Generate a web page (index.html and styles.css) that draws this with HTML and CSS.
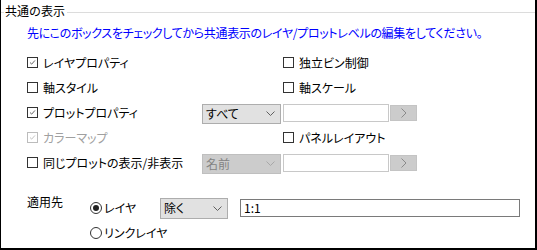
FILE: index.html
```html
<!DOCTYPE html>
<html lang="ja">
<head>
<meta charset="utf-8">
<link rel="stylesheet" href="styles.css">
</head>
<body>
<div class="frame">
  <div class="group-head">
    <span class="gline short"></span>
    <span class="legend">共通の表示</span>
    <span class="gline"></span>
  </div>
  <div class="content">
    <div class="note">先にこのボックスをチェックしてから共通表示のレイヤ/プロットレベルの編集をしてください。</div>
    <div class="grid">
      <label class="chk c1"><span class="box"><svg viewBox="0 0 11 11"><polyline points="2.5,5.5 4.5,7.5 8.5,3" /></svg></span>レイヤプロパティ</label>
      <label class="chk c3"><span class="box"></span>独立ビン制御</label>

      <label class="chk c1"><span class="box"></span>軸スタイル</label>
      <label class="chk c3"><span class="box"></span>軸スケール</label>

      <label class="chk c1"><span class="box"><svg viewBox="0 0 11 11"><polyline points="2.5,5.5 4.5,7.5 8.5,3" /></svg></span>プロットプロパティ</label>
      <div class="select"><span>すべて</span><svg class="arrow" viewBox="0 0 9 5"><polyline points="0.5,0.5 4.5,4.5 8.5,0.5" /></svg></div>
      <div class="input"></div>
      <div class="btn"><svg viewBox="0 0 6 10"><polyline points="0.5,0.5 5,5 0.5,9.5" /></svg></div>

      <label class="chk c1 disabled"><span class="box"><svg viewBox="0 0 11 11"><polyline points="2.5,5.5 4.5,7.5 8.5,3" /></svg></span>カラーマップ</label>
      <label class="chk c3"><span class="box"></span>パネルレイアウト</label>

      <label class="chk c1"><span class="box"></span>同じプロットの表示/非表示</label>
      <div class="select off"><span>名前</span><svg class="arrow" viewBox="0 0 9 5"><polyline points="0.5,0.5 4.5,4.5 8.5,0.5" /></svg></div>
      <div class="input"></div>
      <div class="btn"><svg viewBox="0 0 6 10"><polyline points="0.5,0.5 5,5 0.5,9.5" /></svg></div>
    </div>
    <div class="apply">
      <div class="alabel">適用先</div>
      <label class="radio"><span class="rad on"></span>レイヤ</label>
      <div class="select small"><span>除く</span><svg class="arrow" viewBox="0 0 9 5"><polyline points="0.5,0.5 4.5,4.5 8.5,0.5" /></svg></div>
      <div class="input wide">1:1</div>
      <label class="radio r2"><span class="rad"></span>リンクレイヤ</label>
    </div>
  </div>
</div>
</body>
</html>
```

FILE: styles.css
```css
html, body {
  margin: 0;
  padding: 0;
  background: #ffffff;
}
body {
  font-family: "Noto Sans CJK JP", "Noto Sans", sans-serif;
  font-size: 12px;
  color: #000;
  font-feature-settings: "palt";
}
.frame {
  box-sizing: border-box;
  width: 537px;
  height: 250px;
  border-left: 1px solid #000;
  border-right: 2px solid #000;
  border-bottom: 2px solid #000;
  background: #fff;
}
.group-head {
  display: flex;
  align-items: center;
  height: 24px;
}
.gline {
  flex: 1;
  height: 1px;
  background: #dcdcdc;
}
.gline.short {
  flex: 0 0 3px;
}
.legend {
  padding: 0 2px 2px 1px;
  line-height: 20px;
  font-feature-settings: normal;
}
.content {
  padding-left: 26px;
}
.note {
  color: #0000ff;
  height: 18px;
  line-height: 18px;
  white-space: nowrap;
  letter-spacing: -0.33px;
}
.grid {
  margin-top: 8px;
  display: grid;
  grid-template-columns: 174px 79px 107px 27px;
  column-gap: 1px;
  grid-auto-rows: 25px;
  align-items: center;
}
.c1 { grid-column: 1; }
.c3 { grid-column: 3 / span 2; margin-left: 1px; }
.chk {
  display: flex;
  align-items: center;
  white-space: nowrap;
  line-height: 16px;
}
.box {
  box-sizing: border-box;
  width: 11px;
  height: 11px;
  border: 1px solid #333;
  background: #fff;
  margin-right: 5px;
  display: flex;
}
.box svg {
  width: 9px;
  height: 9px;
  fill: none;
  stroke: #555;
  stroke-width: 1.1;
}
.chk.disabled { color: #a0a0a0; }
.chk.disabled .box { border-color: #bcbcbc; }
.chk.disabled .box svg { stroke: #bcbcbc; }

.select {
  box-sizing: border-box;
  height: 20px;
  margin-top: 2px;
  background: #e1e1e1;
  border: 1px solid #adadad;
  display: flex;
  align-items: center;
  justify-content: space-between;
  padding: 0 5px 0 3px;
  line-height: 16px;
}
.select .arrow {
  width: 9px;
  height: 5px;
  fill: none;
  stroke: #606060;
  stroke-width: 1;
}
.select.off {
  background: #cccccc;
  border-color: #bfbfbf;
  color: #838383;
}
.select.off .arrow { stroke: #a8a8a8; }
.input {
  box-sizing: border-box;
  height: 18px;
  margin-left: 1px;
  background: #fff;
  border: 1px solid #c8c8c8;
  line-height: 16px;
  padding-left: 4px;
}
.btn {
  box-sizing: border-box;
  height: 16px;
  background: #cccccc;
  border: 1px solid #c4c4c4;
  display: flex;
  align-items: center;
  justify-content: center;
}
.btn svg {
  width: 6px;
  height: 10px;
  fill: none;
  stroke: #8a8a8a;
  stroke-width: 1;
}
.apply {
  margin-top: 20px;
  display: grid;
  grid-template-columns: 63px 70px 68px 12px 280px;
  grid-auto-rows: 25px;
  align-items: center;
}
.alabel {
  grid-column: 1;
  align-self: start;
  line-height: 14px;
}
.radio {
  display: flex;
  align-items: center;
  white-space: nowrap;
  grid-column: 2;
}
.radio.r2 {
  grid-row: 2;
  grid-column: 2 / span 3;
}
.rad {
  box-sizing: border-box;
  width: 12px;
  height: 12px;
  border: 1px solid #333;
  border-radius: 50%;
  margin-right: 2px;
  display: flex;
  align-items: center;
  justify-content: center;
}
.rad.on::after {
  content: "";
  width: 6px;
  height: 6px;
  border-radius: 50%;
  background: #222;
}
.select.small {
  grid-column: 3;
  height: 21px;
  margin-top: 1px;
}
.input.wide {
  grid-column: 5;
  height: 18px;
  border-color: #7a7a7a;
  margin-left: 0;
  padding-left: 3px;
}
```
